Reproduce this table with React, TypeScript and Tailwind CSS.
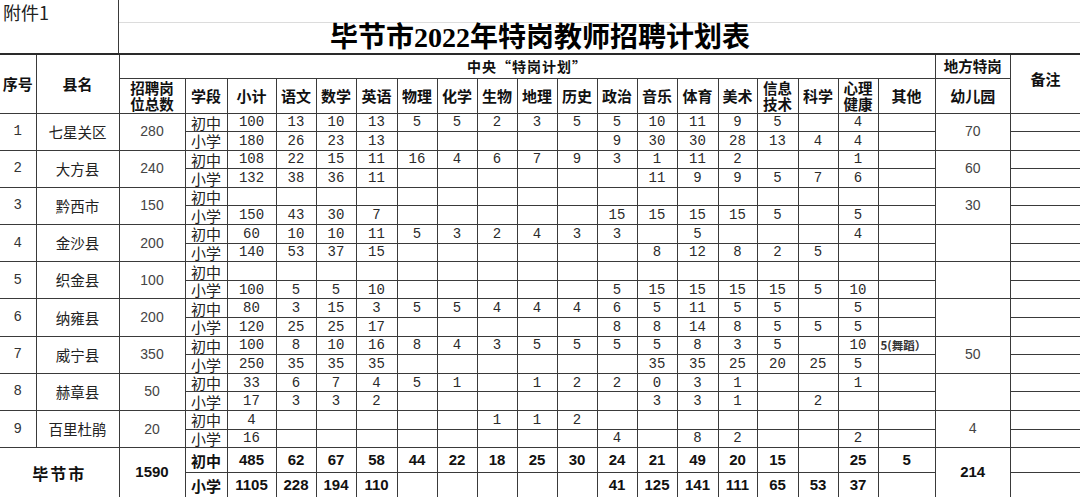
import React from 'react';

const widths = [36, 83, 66, 42, 49, 40, 40, 41, 40, 40, 40, 40, 40, 40, 40, 41, 39, 41, 40, 40, 57, 75, 70];

const subjects: (string | [string, string])[] = [
  '小计', '语文', '数学', '英语', '物理', '化学', '生物', '地理', '历史', '政治', '音乐', '体育', '美术',
  ['信息', '技术'], '科学', ['心理', '健康'], '其他',
];

type D = { n: string; name: string; total: string; kg: string; a: string; b: string };

const rows: D[] = [
  { n: '1', name: '七星关区', total: '280', kg: '70', a: '100 13 10 13 5 5 2 3 5 5 10 11 9 5 - 4 -', b: '180 26 23 13 - - - - - 9 30 30 28 13 4 4 -' },
  { n: '2', name: '大方县', total: '240', kg: '60', a: '108 22 15 11 16 4 6 7 9 3 1 11 2 - - 1 -', b: '132 38 36 11 - - - - - - 11 9 9 5 7 6 -' },
  { n: '3', name: '黔西市', total: '150', kg: '30', a: '- - - - - - - - - - - - - - - - -', b: '150 43 30 7 - - - - - 15 15 15 15 5 - 5 -' },
  { n: '4', name: '金沙县', total: '200', kg: '', a: '60 10 10 11 5 3 2 4 3 3 - 5 - - - 4 -', b: '140 53 37 15 - - - - - - 8 12 8 2 5 - -' },
  { n: '5', name: '织金县', total: '100', kg: '', a: '- - - - - - - - - - - - - - - - -', b: '100 5 5 10 - - - - - 5 15 15 15 15 5 10 -' },
  { n: '6', name: '纳雍县', total: '200', kg: '', a: '80 3 15 3 5 5 4 4 4 6 5 11 5 5 - 5 -', b: '120 25 25 17 - - - - - 8 8 14 8 5 5 5 -' },
  { n: '7', name: '威宁县', total: '350', kg: '50', a: '100 8 10 16 8 4 3 5 5 5 5 8 3 5 - 10 5(舞蹈)', b: '250 35 35 35 - - - - - - 35 35 25 20 25 5 -' },
  { n: '8', name: '赫章县', total: '50', kg: '', a: '33 6 7 4 5 1 - 1 2 2 0 3 1 - - 1 -', b: '17 3 3 2 - - - - - - 3 3 1 - 2 - -' },
  { n: '9', name: '百里杜鹃', total: '20', kg: '4', a: '4 - - - - - 1 1 2 - - - - - - - -', b: '16 - - - - - - - - 4 - 8 2 - - 2 -' },
];

const totA = '485 62 67 58 44 22 18 25 30 24 21 49 20 15 - 25 5';
const totB = '1105 228 194 110 - - - - - 41 125 141 111 65 53 37 -';

const split = (s: string) => s.split(' ').map((v) => (v === '-' ? '' : v));

const cell = 'border border-[#3a3a3a] p-0 text-center align-middle whitespace-nowrap overflow-hidden';
const cjk = "font-['Noto_Sans_CJK_SC',sans-serif]";
const mono = "font-['Liberation_Mono','Noto_Sans_CJK_SC',monospace]";
const sans = "font-['Liberation_Sans','Noto_Sans_CJK_SC',sans-serif]";

function DataCell({ v }: { v: string }) {
  if (v.includes('舞')) {
    return (
      <td className={`${cell} text-left pl-[2px] ${cjk} text-[11.5px] font-semibold text-[#333]`}>
        5(舞蹈）
      </td>
    );
  }
  return <td className={`${cell} ${mono} text-[14px] text-[#2a2a2a] leading-none`}>{v}</td>;
}

export default function App() {
  return (
    <div className="w-[1080px] h-[497px] overflow-hidden bg-white text-[#111]">
      <div className="flex h-[55px] border-b-2 border-[#2a2a2a]">
        <div className={`w-[119px] shrink-0 border-r border-[#3a3a3a] pl-[3px] text-[18px] leading-[24px] text-[#222] ${cjk}`}>
          附件1
        </div>
        <div className="flex flex-1 flex-col">
          <div className="h-[23px] border-b border-[#dcdcdc]" />
          <div className="flex flex-1 items-center justify-center pr-[119px] text-[28px] font-bold leading-none text-black font-['Liberation_Serif','Noto_Sans_CJK_SC',serif]">
            毕节市2022年特岗教师招聘计划表
          </div>
        </div>
      </div>

      <table className="table-fixed w-[1080px] border-collapse">
        <colgroup>
          {widths.map((w, i) => (
            <col key={i} style={{ width: w }} />
          ))}
        </colgroup>
        <thead>
          <tr className="h-[23px]">
            <th rowSpan={2} className={`${cell} border-t-0 border-l-0 ${cjk} text-[15px] font-bold leading-none`}>
              序号
            </th>
            <th rowSpan={2} className={`${cell} border-t-0 ${cjk} text-[15px] font-bold leading-none`}>
              县名
            </th>
            <th colSpan={19} className={`${cell} border-t-0 ${cjk} text-[14px] font-bold leading-none tracking-[1px]`}>
              中央“特岗计划”
            </th>
            <th className={`${cell} border-t-0 ${cjk} text-[14.5px] font-bold leading-none`}>地方特岗</th>
            <th rowSpan={2} className={`${cell} border-t-0 border-r-0 ${cjk} text-[15px] font-bold leading-none pb-[10px]`}>
              备注
            </th>
          </tr>
          <tr className="h-[35px]">
            <th className={`${cell} ${cjk} text-[14.5px] font-bold leading-[16px]`}>
              <div>招聘岗</div>
              <div>位总数</div>
            </th>
            <th className={`${cell} ${cjk} text-[15px] font-bold leading-none`}>学段</th>
            {subjects.map((s, i) => (
              <th key={i} className={`${cell} ${cjk} font-bold ${Array.isArray(s) ? 'text-[14.5px] leading-[16px]' : 'text-[15px] leading-none'}`}>
                {Array.isArray(s) ? (
                  <>
                    <div>{s[0]}</div>
                    <div>{s[1]}</div>
                  </>
                ) : (
                  s
                )}
              </th>
            ))}
            <th className={`${cell} ${cjk} text-[15px] font-bold leading-none`}>幼儿园</th>
          </tr>
        </thead>
        <tbody>
          {rows.map((r) => (
            <React.Fragment key={r.n}>
              <tr className="h-[18.6px]">
                <td rowSpan={2} className={`${cell} border-l-0 ${mono} text-[14px] text-[#333]`}>
                  {r.n}
                </td>
                <td rowSpan={2} className={`${cell} ${cjk} text-[14.5px] text-[#222]`}>
                  {r.name}
                </td>
                <td rowSpan={2} className={`${cell} ${sans} text-[14px] text-[#444]`}>
                  {r.total}
                </td>
                <td className={`${cell} ${cjk} text-[15px] leading-none text-[#222]`}>初中</td>
                {split(r.a).map((v, i) => (
                  <DataCell key={i} v={v} />
                ))}
                <td rowSpan={2} className={`${cell} ${r.kg === '4' ? mono : sans} text-[14px] text-[#444]`}>
                  {r.kg}
                </td>
                <td className={`${cell} border-r-0`} />
              </tr>
              <tr className="h-[18.6px]">
                <td className={`${cell} ${cjk} text-[15px] leading-none text-[#222]`}>小学</td>
                {split(r.b).map((v, i) => (
                  <DataCell key={i} v={v} />
                ))}
                <td className={`${cell} border-r-0`} />
              </tr>
            </React.Fragment>
          ))}
          <tr className="h-[25px]">
            <td colSpan={2} rowSpan={2} className={`${cell} border-l-0 ${cjk} text-[16px] font-bold tracking-[2px]`}>
              毕节市
            </td>
            <td rowSpan={2} className={`${cell} ${sans} text-[15px] font-bold`}>
              1590
            </td>
            <td className={`${cell} ${cjk} text-[15px] font-bold leading-none`}>初中</td>
            {split(totA).map((v, i) => (
              <td key={i} className={`${cell} ${sans} text-[15px] font-bold`}>
                {v}
              </td>
            ))}
            <td rowSpan={2} className={`${cell} ${sans} text-[15px] font-bold`}>
              214
            </td>
            <td className={`${cell} border-r-0`} />
          </tr>
          <tr className="h-[25px]">
            <td className={`${cell} ${cjk} text-[15px] font-bold leading-none`}>小学</td>
            {split(totB).map((v, i) => (
              <td key={i} className={`${cell} ${sans} text-[15px] font-bold`}>
                {v}
              </td>
            ))}
            <td className={`${cell} border-r-0`} />
          </tr>
        </tbody>
      </table>
    </div>
  );
}
